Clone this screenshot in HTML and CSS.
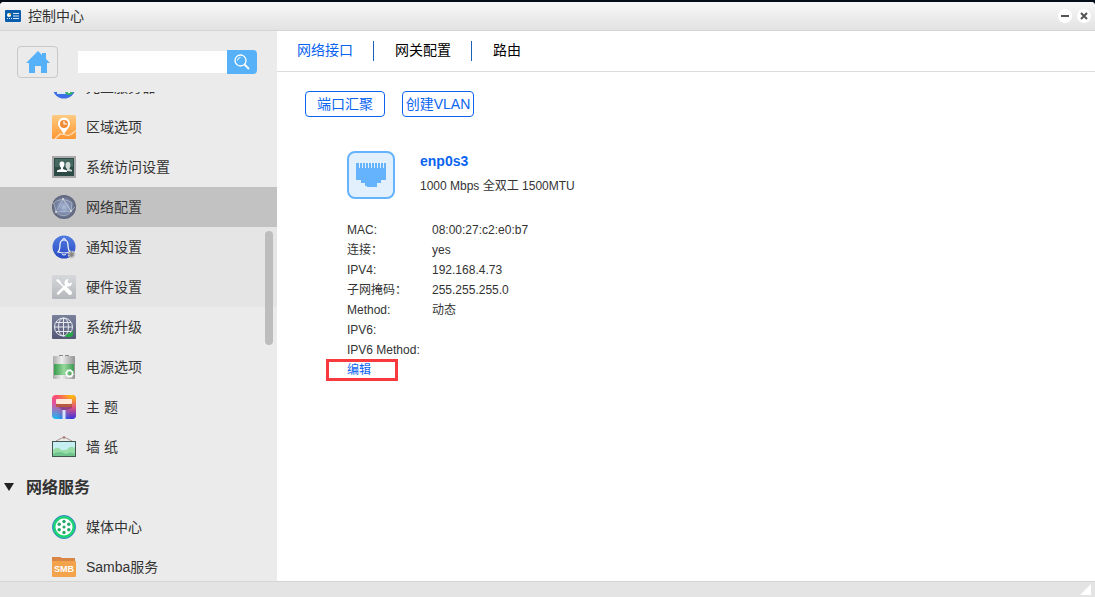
FILE: index.html
```html
<!DOCTYPE html>
<html lang="zh-CN">
<head>
    <meta charset="UTF-8">
    <meta name="viewport" content="width=device-width, initial-scale=1.0">
    <title>控制中心</title>
    <link rel="stylesheet" href="styles.css">
</head>
<body>

    <div class="window">
        <header class="titlebar">
            <svg class="title-icon" width="16" height="12" viewBox="0 0 16 12">
                <rect width="16" height="12" rx="1" fill="#0a5cae"/>
                <circle cx="4" cy="5" r="2" fill="#fff"/>
                <path d="M4 5V3a2 2 0 0 1 2 2z" fill="#ffc83d"/>
                <path d="M8 3.500h6M8 6h6M8 8.500h6" stroke="#d8ecff" fill="none"/>
                <path d="M2 8.500h5" stroke="#d8ecff" stroke-dasharray="1 1"/>
            </svg>
            <h1>控制中心</h1>
            <button type="button" class="win-btn" aria-label="最小化">
                <svg width="14" height="14" viewBox="0 0 14 14"><path d="M3 7h8" stroke="#555" stroke-width="2"/></svg>
            </button>
            <button type="button" class="win-btn" aria-label="关闭">
                <svg width="14" height="14" viewBox="0 0 14 14"><path d="M4 4l6 6M10 4l-6 6" stroke="#555" stroke-width="2"/></svg>
            </button>
        </header>

        <div class="body">
            <aside class="sidebar">
                <form class="tools">
                    <button type="button" class="home-btn" aria-label="主页">
                        <svg width="24" height="22" viewBox="0 0 24 22">
                            <path d="M12 0l4 4V2h4v6l4 4h-3v10h-6v-7H9v7H3V12H0z" fill="#56b1f9"/>
                        </svg>
                    </button>
                    <input type="text" class="search-input" aria-label="搜索">
                    <button type="submit" class="search-btn" aria-label="搜索">
                        <svg width="16" height="16" viewBox="0 0 16 16" fill="none" stroke="#fff">
                            <circle cx="6.500" cy="6.500" r="5.500" stroke-width="1.300"/>
                            <path d="M3.500 6.500a3 3 0 0 1 3-3"/>
                            <path d="M10.500 10.500l4.500 4.500" stroke-width="1.800"/>
                        </svg>
                    </button>
                </form>

                <nav class="menu">
                    <a href="#" class="item">
                        <svg class="icon" viewBox="0 0 24 24">
                            <circle cx="12" cy="12" r="11.500" fill="#3a6fe6"/>
                            <path d="M5 10h9v9H5z" fill="#dbe8ff"/>
                            <circle cx="17" cy="16" r="4" fill="#35b46a"/>
                            <path d="M15 16l2 2 3-3" stroke="#fff" fill="none"/>
                        </svg>
                        <span>光盘服务器</span>
                    </a>
                    <a href="#" class="item">
                        <svg class="icon" viewBox="0 0 24 24">
                            <defs><linearGradient id="gOrange" x2="0" y2="1"><stop stop-color="#fccb82"/><stop offset="1" stop-color="#ff9632"/></linearGradient></defs>
                            <rect width="24" height="24" rx="1.500" fill="url(#gOrange)"/>
                            <path d="M3 24l5-5 4 .5 4 1 3-1 5-4" stroke="#fde0bd" stroke-width="1.200" fill="none"/>
                            <path d="M12 19.500C9 14 6 12 6 8.500a6 6 0 0 1 12 0C18 12 15 14 12 19.500z" fill="#fff"/>
                            <circle cx="12" cy="9" r="4" fill="#f08a35"/>
                            <path d="M12 6v3h3" stroke="#fff" stroke-width="1.200" fill="none"/>
                        </svg>
                        <span>区域选项</span>
                    </a>
                    <a href="#" class="item">
                        <svg class="icon" viewBox="0 0 24 24">
                            <path d="M0 1h24v22H0z" fill="#aaa"/>
                            <path d="M2 3h20v18H2z" fill="#2d4b45"/>
                            <path d="M3 4h18v8H3z" fill="#446860"/>
                            <path d="M15 16v-2l-1-1c-1-4 0-6 2-6s3 2 2 5l-.5 2 2.500 1v1.500z" fill="#cfdad7"/>
                            <path d="M5 17v-1.500l4-1.500v-1C6.500 9 7.500 6.500 10 6.500s3.500 2.500 1 6.500v1l4 1.500V17z" fill="#fff"/>
                        </svg>
                        <span>系统访问设置</span>
                    </a>
                    <a href="#" class="item active">
                        <svg class="icon" viewBox="0 0 24 24">
                            <defs><radialGradient id="gNet"><stop stop-color="#aebbd9"/><stop offset=".5" stop-color="#8190b3"/><stop offset="1" stop-color="#5c6176"/></radialGradient></defs>
                            <circle cx="12" cy="12" r="12" fill="url(#gNet)"/>
                            <path d="M11 4L4 17l15-1zM1 9c4-5 12-6 19-1M11 4l8 12 4-4M4 17c5 5 11 5 15-1M2 8l2 9M20 8l-1 8" stroke="#c6cbd5" stroke-width=".6" fill="none"/>
                            <g fill="#ddd"><circle cx="11" cy="4" r="1"/><circle cx="4" cy="17" r="1"/><circle cx="19" cy="16" r="1"/></g>
                        </svg>
                        <span>网络配置</span>
                    </a>
                    <a href="#" class="item tint">
                        <svg class="icon" viewBox="0 0 24 24">
                            <defs><linearGradient id="gBlue" x2="0" y2="1"><stop stop-color="#527be3"/><stop offset="1" stop-color="#294bc2"/></linearGradient></defs>
                            <circle cx="12" cy="12" r="11.500" fill="url(#gBlue)"/>
                            <path d="M6 17c2-2 2-4 2-7 0-3 1.500-5 4-5s4 2 4 5c0 3 0 5 2 7-3 1-9 1-12 0z" stroke="#fff" stroke-width="1.200" fill="none"/>
                            <path d="M10.500 5a1.500 1.500 0 0 1 3 0M10 18.500a2 1.500 0 0 0 4 0" stroke="#fff" fill="none"/>
                            <circle cx="19.500" cy="19.500" r="3" fill="#888" stroke="#c4c4c4" stroke-width="1.800" stroke-dasharray="1.500 .9"/>
                        </svg>
                        <span>通知设置</span>
                    </a>
                    <a href="#" class="item tint">
                        <svg class="icon" viewBox="0 0 24 24">
                            <defs><linearGradient id="gGray" x2="0" y2="1"><stop stop-color="#d6d8dc"/><stop offset="1" stop-color="#b4b7bb"/></linearGradient></defs>
                            <rect width="24" height="24" rx="1.500" fill="url(#gGray)"/>
                            <path d="M16 9L6 18.500" stroke="#fff" stroke-width="2.500" stroke-linecap="round"/>
                            <path d="M20 7.500a3.800 3.800 0 1 1-3.500-3.500L15.500 7l1.500 1.500z" fill="#fff"/>
                            <path d="M4 5l2-1 3 3-1 1.500L5.500 7z" fill="#fff"/>
                            <path d="M7 7l6 6" stroke="#fff" stroke-width="1.500"/>
                            <path d="M14 14l4 4" stroke="#fff" stroke-width="4" stroke-linecap="round"/>
                        </svg>
                        <span>硬件设置</span>
                    </a>
                    <a href="#" class="item">
                        <svg class="icon" viewBox="0 0 24 24">
                            <defs><linearGradient id="gSlate" x2="0" y2="1"><stop stop-color="#7a819b"/><stop offset="1" stop-color="#545a75"/></linearGradient></defs>
                            <rect width="24" height="24" rx="1" fill="url(#gSlate)"/>
                            <g stroke="#e6e8f0" fill="none"><circle cx="11.500" cy="12" r="9"/><ellipse cx="11.500" cy="12" rx="5" ry="9"/><path d="M2.500 12h18M11.500 3v18M4 7.500h15M4 16.500h15"/></g>
                            <path d="M13 21c2-3 5-2 8-5v4l-2 2h-5z" fill="#28a745"/>
                        </svg>
                        <span>系统升级</span>
                    </a>
                    <a href="#" class="item">
                        <svg class="icon" viewBox="0 0 24 24">
                            <defs>
                                <linearGradient id="gMetal"><stop stop-color="#aaa"/><stop offset=".4" stop-color="#eee"/><stop offset="1" stop-color="#929292"/></linearGradient>
                                <linearGradient id="gGreen"><stop stop-color="#389c4c"/><stop offset=".5" stop-color="#96d89d"/><stop offset="1" stop-color="#3c9b50"/></linearGradient>
                            </defs>
                            <path d="M7 0h4v1H7zM13 0h4v1h-4z" fill="#888"/>
                            <rect x="1" y="1" width="22" height="23" rx="1" fill="url(#gMetal)"/>
                            <path d="M2 9h20v11H2z" fill="url(#gGreen)"/>
                            <circle cx="17.500" cy="18.500" r="3" fill="none" stroke="#fff" stroke-width="1.500"/>
                            <circle cx="17.500" cy="18.500" r="4" fill="none" stroke="#fff" stroke-dasharray="1.500 1.600"/>
                        </svg>
                        <span>电源选项</span>
                    </a>
                    <a href="#" class="item">
                        <svg class="icon" viewBox="0 0 24 24">
                            <defs>
                                <linearGradient id="gTheme" x2="0" y2="1"><stop stop-color="#ff4f67"/><stop offset=".35" stop-color="#e052a0"/><stop offset="1" stop-color="#18b8f4"/></linearGradient>
                                <linearGradient id="gTheme2" x2="0" y2="1"><stop stop-color="#ffc400"/><stop offset=".5" stop-color="#e5547c"/><stop offset="1" stop-color="#3b30dc"/></linearGradient>
                                <linearGradient id="gFade"><stop offset=".2" stop-color="#fff" stop-opacity="0"/><stop offset=".8" stop-color="#fff"/></linearGradient>
                                <mask id="mFade"><path d="M0 0h24v24H0z" fill="url(#gFade)"/></mask>
                            </defs>
                            <rect width="24" height="24" rx="4" fill="url(#gTheme)"/>
                            <rect width="24" height="24" rx="4" fill="url(#gTheme2)" mask="url(#mFade)"/>
                            <path d="M4 10h16v3l-6 2h-4z" fill="#5b2877" opacity=".5"/>
                            <rect x="4" y="5" width="16" height="7" rx="1" fill="#b65a40"/>
                            <rect x="4" y="4" width="16" height="5" rx="1" fill="#ffe9d9"/>
                            <path d="M10.500 15h3v9h-3z" fill="#d9e5ff"/>
                        </svg>
                        <span>主 题</span>
                    </a>
                    <a href="#" class="item">
                        <svg class="icon" viewBox="0 0 24 24">
                            <path d="M4 6l8-4 8 4" stroke="#b0948b" fill="none"/>
                            <circle cx="12" cy="2.500" r="1.200" fill="#a1796d"/>
                            <rect x=".5" y="6.500" width="23" height="15" fill="#c6eff3" stroke="#42544f"/>
                            <path d="M1 15c3-3 6-3 8 0 2 1 4-1 6 0 2-4 5-4 8-2v8H1z" fill="#98dca6"/>
                            <path d="M1 19c5-3 9-2 13 0 3-2 6-2 9 0v2H1z" fill="#70c58e"/>
                        </svg>
                        <span>墙 纸</span>
                    </a>
                    <h2 class="group">
                        <svg width="10" height="8" viewBox="0 0 10 8"><path d="M0 0h10L5 8z" fill="#222"/></svg>
                        <span>网络服务</span>
                    </h2>
                    <a href="#" class="item">
                        <svg class="icon" viewBox="0 0 24 24">
                            <circle cx="12" cy="12" r="11.500" fill="#1dd474" stroke="#3b83cc"/>
                            <circle cx="12" cy="12" r="8.500" fill="#fff"/>
                            <g fill="#22a866"><circle cx="12" cy="12" r="1.500"/><circle cx="12" cy="6.500" r="1.700"/><circle cx="12" cy="17.500" r="1.700"/><circle cx="7.200" cy="9.300" r="1.700"/><circle cx="16.800" cy="9.300" r="1.700"/><circle cx="7.200" cy="14.700" r="1.700"/><circle cx="16.800" cy="14.700" r="1.700"/></g>
                        </svg>
                        <span>媒体中心</span>
                    </a>
                    <a href="#" class="item">
                        <svg class="icon" viewBox="0 0 24 24">
                            <path d="M0 2h8l2 1h13v5H0z" fill="#d98545"/>
                            <rect y="6" width="24" height="16" rx="1" fill="#f2a34c"/>
                            <text x="12" y="17" class="smb" text-anchor="middle">SMB</text>
                        </svg>
                        <span>Samba服务</span>
                    </a>
                    <div class="scrollbar"></div>
                </nav>
            </aside>

            <main class="content">
                <nav class="tabs">
                    <a href="#" class="tab current">网络接口</a>
                    <a href="#" class="tab">网关配置</a>
                    <a href="#" class="tab">路由</a>
                </nav>

                <div class="actions">
                    <button type="button" class="btn btn-wide">端口汇聚</button>
                    <button type="button" class="btn">创建VLAN</button>
                </div>

                <section class="card">
                    <div class="card-head">
                        <svg width="48" height="48" viewBox="0 0 48 48">
                            <rect x="1" y="1" width="46" height="46" rx="7" fill="#e1f0fc" stroke="#66b3fd" stroke-width="2"/>
                            <path d="M9 12h30v17h-5v3h-4v4H20v-1h-2v-3h-4v-3H9z" fill="#66b3fd"/>
                            <path d="M12.500 12v5M15.500 12v5M18.500 12v5M21.500 12v5M24.500 12v5M27.500 12v5M30.500 12v5M33.500 12v5M36.500 12v5" stroke="#e1f0fc"/>
                        </svg>
                        <div>
                            <h3>enp0s3</h3>
                            <p>1000 Mbps 全双工 1500MTU</p>
                        </div>
                    </div>

                    <dl class="info">
                        <dt>MAC:</dt><dd>08:00:27:c2:e0:b7</dd>
                        <dt>连接：</dt><dd>yes</dd>
                        <dt>IPV4:</dt><dd>192.168.4.73</dd>
                        <dt>子网掩码：</dt><dd>255.255.255.0</dd>
                        <dt>Method:</dt><dd>动态</dd>
                        <dt>IPV6:</dt><dd></dd>
                        <dt>IPV6 Method:</dt><dd></dd>
                    </dl>
                    <a href="#" class="edit">编辑</a>
                </section>
            </main>
        </div>

        <footer class="statusbar">
            <svg width="11" height="11" viewBox="0 0 11 11"><path d="M11 0v11H0z" fill="#fff"/></svg>
        </footer>
    </div>

</body>
</html>
```
FILE: styles.css
```css
* {
    box-sizing: border-box;
}

body {
    margin: 0;
    padding-top: 2px;
    height: 100vh;
    background-color: #040e1a;
    font-family: "Liberation Sans", "Noto Sans CJK SC", sans-serif;
    font-size: 14px;
    color: #333;
}

h1, h2, h3, p, dl, dd {
    margin: 0;
}

a {
    color: inherit;
    text-decoration: none;
}

button {
    padding: 0;
    border: none;
    font-family: inherit;
    cursor: pointer;
}

svg {
    display: block;
    flex-shrink: 0;
}

.window {
    display: flex;
    flex-direction: column;
    height: 100%;
    overflow: hidden;
    border-radius: 4px 4px 0 0;
    background-color: #fff;
}

/* title bar */
.titlebar {
    display: flex;
    align-items: center;
    gap: 5px;
    height: 29px;
    padding: 0 4px 0 5px;
    border-bottom: 1px solid #d4d4d4;
    background: linear-gradient(#f8f8f8, #e2e2e2);
}

.titlebar h1 {
    flex: 1;
    padding-left: 2px;
    font-size: 14px;
    font-weight: normal;
    line-height: 28px;
}

.win-btn {
    width: 14px;
    height: 14px;
    border-radius: 50%;
    background-color: #fff;
}

.body {
    display: flex;
    flex: 1;
    min-height: 0;
}

/* sidebar */
.sidebar {
    display: flex;
    flex-direction: column;
    width: 277px;
    background-color: #ebebeb;
}

.tools {
    display: flex;
    align-items: center;
    height: 61px;
    padding: 0 20px 0 17px;
}

.home-btn {
    display: flex;
    align-items: center;
    justify-content: center;
    width: 41px;
    height: 32px;
    margin-right: 20px;
    border: 1px solid #c8c8c8;
    border-radius: 4px;
    background-color: transparent;
}

.search-input {
    flex: 1;
    min-width: 0;
    height: 22px;
    padding: 0 4px;
    border: none;
    background-color: #fff;
}

.search-btn {
    display: flex;
    align-items: center;
    justify-content: center;
    width: 30px;
    height: 24px;
    border-radius: 0 4px 4px 0;
    background-color: #56b1f9;
}

.menu {
    position: relative;
    flex: 1;
    min-height: 0;
    overflow: hidden;
}

.item {
    display: flex;
    align-items: center;
    gap: 10px;
    height: 40px;
    padding-left: 52px;
}

.item span,
.group span {
    padding-bottom: 2px;
}

/* the list is scrolled, its first row is partly hidden */
.item:first-child {
    margin-top: -25px;
}

.item.active {
    background-color: #c2c2c2;
}

.item.tint {
    background-color: #e5e5e5;
}

.icon {
    width: 24px;
    height: 24px;
}

.smb {
    font-size: 9px;
    font-weight: bold;
    fill: #fff;
}

.group {
    display: flex;
    align-items: center;
    gap: 12px;
    height: 40px;
    padding-left: 4px;
    font-size: 16px;
    font-weight: bold;
}

.scrollbar {
    position: absolute;
    top: 139px;
    right: 4px;
    width: 8px;
    height: 114px;
    border-radius: 4px;
    background-color: #bdbdbd;
}

/* content */
.content {
    flex: 1;
    min-width: 0;
}

.tabs {
    display: flex;
    align-items: center;
    height: 41px;
    border-bottom: 1px solid #dcdcdc;
    color: #000;
}

.tab {
    padding: 0 20px 2px;
    line-height: 18px;
}

.tab + .tab {
    padding-left: 21px;
    border-left: 1px solid #1b63b8;
}

.tab.current {
    color: #0a64f0;
}

.actions {
    display: flex;
    gap: 17px;
    padding: 19px 28px;
}

.btn {
    width: 72px;
    height: 26px;
    padding-bottom: 2px;
    border: 1px solid #0a64f0;
    border-radius: 4px;
    background-color: #fff;
    color: #0a64f0;
    font-size: 14px;
    white-space: nowrap;
}

.btn-wide {
    width: 80px;
}

.card {
    padding: 15px 70px;
    font-size: 12px;
    line-height: 20px;
}

.card-head {
    display: flex;
    gap: 25px;
    margin-bottom: 21px;
}

.card-head h3 {
    margin-bottom: 5px;
    color: #0a64f0;
    font-size: 14px;
}

.info {
    display: grid;
    grid-template-columns: 85px 1fr;
    grid-auto-rows: 20px;
    margin-bottom: -1px;
}

.info dt {
    white-space: nowrap;
}

.edit {
    display: block;
    width: 72px;
    margin-left: -21px;
    padding-left: 18px;
    border: 3px solid #f83a3e;
    color: #0a64f0;
    line-height: 16px;
}

.statusbar {
    display: flex;
    align-items: flex-end;
    justify-content: flex-end;
    height: 16px;
    padding: 2px 4px;
    border-top: 1px solid #d4d4d4;
    background-color: #e4e4e4;
}
```
